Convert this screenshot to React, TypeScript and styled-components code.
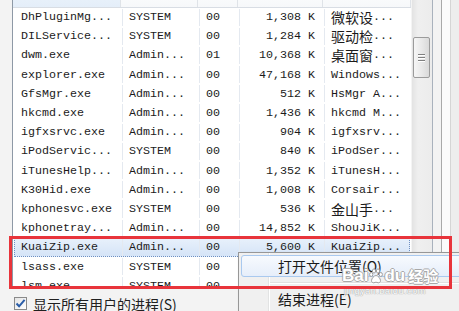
import React from "react";
import styled, { createGlobalStyle } from "styled-components";

type Proc = { name: string; user: string; cpu: string; mem: string; desc: string };

const procs: Proc[] = [
  { name: "DhPluginMg...", user: "SYSTEM", cpu: "00", mem: "1,308 K", desc: "微软设..." },
  { name: "DILService...", user: "SYSTEM", cpu: "00", mem: "1,284 K", desc: "驱动检..." },
  { name: "dwm.exe", user: "Admin...", cpu: "01", mem: "10,368 K", desc: "桌面窗..." },
  { name: "explorer.exe", user: "Admin...", cpu: "00", mem: "47,168 K", desc: "Windows..." },
  { name: "GfsMgr.exe", user: "Admin...", cpu: "00", mem: "512 K", desc: "HsMgr A..." },
  { name: "hkcmd.exe", user: "Admin...", cpu: "00", mem: "1,436 K", desc: "hkcmd M..." },
  { name: "igfxsrvc.exe", user: "Admin...", cpu: "00", mem: "904 K", desc: "igfxsrv..." },
  { name: "iPodServic...", user: "SYSTEM", cpu: "00", mem: "840 K", desc: "iPodSer..." },
  { name: "iTunesHelp...", user: "Admin...", cpu: "00", mem: "1,352 K", desc: "iTunesH..." },
  { name: "K30Hid.exe", user: "Admin...", cpu: "00", mem: "1,008 K", desc: "Corsair..." },
  { name: "kphonesvc.exe", user: "SYSTEM", cpu: "00", mem: "536 K", desc: "金山手..." },
  { name: "kphonetray...", user: "Admin...", cpu: "00", mem: "14,852 K", desc: "ShouJiK..." },
  { name: "KuaiZip.exe", user: "Admin...", cpu: "00", mem: "5,600 K", desc: "KuaiZip..." },
  { name: "lsass.exe", user: "SYSTEM", cpu: "00", mem: "2,904 K", desc: "Local S..." },
  { name: "lsm.exe", user: "SYSTEM", cpu: "00", mem: "1,016 K", desc: "本地会..." },
];

const SELECTED = "KuaiZip.exe";

// wide (CJK) chars are twice the width of the ascii ones, like SimSun
const splitWide = (text: string) => {
  const parts = text.split(/([\u3400-\u9fff]+)/).filter(Boolean);
  return parts.map((p, i) => (/[\u3400-\u9fff]/.test(p) ? <Wide key={i}>{p}</Wide> : p));
};

const GlobalStyle = createGlobalStyle`
  html, body {
    margin: 0;
    padding: 0;
    background: #f3f3f3;
    overflow: hidden;
  }
  #root {
    width: 459px;
    height: 311px;
  }
`;

const Window = styled.div`
  position: relative;
  display: grid;
  grid-template-columns: 12px 421px 8px 1px 1fr;
  grid-template-rows: 289px 22px;
  width: 459px;
  height: 311px;
  overflow: hidden;
  background: #f3f3f3;
  font-family: "Liberation Mono", "Noto Sans CJK SC", monospace;
  color: #1b1b1b;
`;

const ListPane = styled.div`
  grid-column: 2;
  grid-row: 1;
  display: flex;
  box-sizing: border-box;
  border-left: 1px solid #8e99a6;
  border-right: 1px solid #a9b2bd;
  border-bottom: 1px solid #8e99a6;
  background: #fff;
  overflow: hidden;
`;

const Table = styled.div`
  flex: 1;
  overflow: hidden;
`;

const COLS = "108px 77px 40px 85px 88px";

const HeaderRow = styled.div`
  display: grid;
  grid-template-columns: ${COLS};
  height: 24px;
  margin-top: -16.5px;
  border-bottom: 1px solid #d8dde4;
  box-sizing: border-box;
`;

const HeaderCell = styled.div<{ $active?: boolean }>`
  padding-left: 7px;
  line-height: 14px;
  font-size: 12px;
  font-family: "Noto Sans CJK SC", sans-serif;
  color: #666;
  white-space: nowrap;
  overflow: hidden;
  border-right: 1px solid #dfe3e8;
  background: ${p => (p.$active ? "linear-gradient(#eef5fc, #e4eef9)" : "linear-gradient(#ffffff, #f6f8fa)")};
`;

const Row = styled.div<{ $selected?: boolean }>`
  display: grid;
  grid-template-columns: ${COLS};
  height: 19.2px;
  box-sizing: border-box;
  margin-left: 1px;
  margin-right: 1px;
  border: 1px dotted ${p => (p.$selected ? "#6d8fc2" : "transparent")};
  background: ${p => (p.$selected ? "linear-gradient(#e7f0fb, #d5e4f7)" : "transparent")};
`;

const Cell = styled.div<{ $right?: boolean }>`
  display: flex;
  align-items: center;
  justify-content: ${p => (p.$right ? "flex-end" : "flex-start")};
  padding: ${p => (p.$right ? "0 9px 0 0" : "0 0 0 6px")};
  font-size: 11.67px;
  white-space: pre;
  overflow: hidden;
  border-right: 1px solid #e4e9f0;
`;

const Wide = styled.span`
  font-family: "Noto Sans CJK SC", sans-serif;
  font-size: 14px;
  line-height: 1;
`;

const ScrollTrack = styled.div`
  position: relative;
  width: 21px;
  background: linear-gradient(90deg, #e3e3e3, #efefef 30%, #ececec);
  border-left: 1px solid #f4f4f4;
  box-sizing: border-box;
  padding-top: 37px;
`;

const Thumb = styled.div`
  display: flex;
  flex-direction: column;
  align-items: center;
  justify-content: center;
  gap: 2px;
  width: 17px;
  height: 41px;
  margin-left: 1px;
  box-sizing: border-box;
  border: 1px solid #9b9b9b;
  border-radius: 2px;
  background: linear-gradient(90deg, #f6f6f6, #e9e9e9 50%, #d9d9d9);
`;

const Grip = styled.span`
  width: 7px;
  height: 1px;
  background: #808080;
  box-shadow: 0 1px 0 #fff;
`;

const FrameLine = styled.div`
  grid-column: 4;
  grid-row: 1 / 3;
  background: #a9a9a9;
`;

const FrameEdge = styled.div`
  grid-column: 5;
  grid-row: 1 / 3;
  background: linear-gradient(90deg, #fbfbfb 0, #fbfbfb 8px, #d5d5d5 8px, #d5d5d5 9px, #ededed 9px);
`;

const Footer = styled.div`
  grid-column: 1 / 4;
  grid-row: 2;
  display: flex;
  align-items: center;
  gap: 6px;
  padding: 7px 0 0 14px;
`;

const CheckBox = styled.span`
  display: flex;
  align-items: center;
  justify-content: center;
  width: 13px;
  height: 13px;
  box-sizing: border-box;
  border: 1px solid #8a8a8a;
  background: linear-gradient(135deg, #e4e4e4, #ffffff);
`;

const FooterLabel = styled.span`
  font-family: "Noto Sans CJK SC", sans-serif;
  font-size: 14px;
  color: #202020;
  white-space: nowrap;
`;

const Menu = styled.div`
  position: absolute;
  left: 238px;
  top: 252px;
  width: 250px;
  height: 80px;
  padding: 2px;
  box-sizing: border-box;
  background: #f0f0f0;
  border: 1px solid #979797;
  box-shadow: 2px 2px 3px rgba(0, 0, 0, 0.25);
  font-family: "Noto Sans CJK SC", sans-serif;
  font-size: 14px;
  color: #1a1a1a;

  &::before {
    content: "";
    position: absolute;
    left: 29px;
    top: 0;
    bottom: 0;
    width: 1px;
    background: #e2e3e3;
    box-shadow: 1px 0 0 #fff;
  }
`;

const MenuItem = styled.div<{ $hot?: boolean }>`
  position: relative;
  z-index: 1;
  height: 22px;
  line-height: 21px;
  padding-left: 36px;
  box-sizing: border-box;
  border: 1px solid ${p => (p.$hot ? "#a9c9ef" : "transparent")};
  border-radius: 3px;
  background: ${p => (p.$hot ? "linear-gradient(#f7fafe, #e6eefa)" : "transparent")};
`;

const Separator = styled.div`
  height: 11px;
  margin-left: 28px;
  background: linear-gradient(transparent 5px, #e0e0e0 5px, #e0e0e0 6px, #fff 6px, #fff 7px, transparent 7px);
`;

const Watermark = styled.div`
  position: absolute;
  left: 342px;
  top: 267px;
  z-index: 4;
  display: flex;
  flex-direction: column;
  color: #fff;
  text-shadow: 1px 0 0 #a8a8a8, -1px 0 0 #a8a8a8, 0 1px 0 #a8a8a8, 0 -1px 0 #a8a8a8;
  pointer-events: none;
`;

const Brand = styled.div`
  display: flex;
  align-items: center;
  font-family: "Liberation Sans", sans-serif;
  font-weight: bold;
  font-size: 17px;
  line-height: 18px;
`;

const BrandCn = styled.span`
  font-family: "Noto Sans CJK SC", sans-serif;
  font-weight: bold;
  font-size: 15px;
  margin-left: 3px;
`;

const Site = styled.div`
  font-family: "Liberation Sans", sans-serif;
  font-size: 9.5px;
  line-height: 11px;
  letter-spacing: 0.3px;
  margin-left: 2px;
  text-shadow: 0 0 1px #9a9a9a, 0 0 1px #9a9a9a;
`;

const Annotation = styled.div`
  position: absolute;
  left: 9px;
  top: 236px;
  width: 443px;
  height: 53px;
  box-sizing: border-box;
  border: 3px solid #e8343b;
  z-index: 5;
  pointer-events: none;
`;

const Paw = () => (
  <svg width="14" height="16" viewBox="0 0 14 16" style={{ margin: "0 1px" }}>
    <g fill="#fff" stroke="#a0a0a0" strokeWidth="1">
      <ellipse cx="2.2" cy="6.5" rx="1.6" ry="2" />
      <ellipse cx="5" cy="3" rx="1.6" ry="2.1" />
      <ellipse cx="9" cy="3" rx="1.6" ry="2.1" />
      <ellipse cx="11.8" cy="6.5" rx="1.6" ry="2" />
      <path d="M7 7.5c-2 0-4.5 3-4.5 5.2 0 1.6 1.3 2.3 2.4 2.1 1-.2 1.4-.6 2.1-.6s1.1.4 2.1.6c1.1.2 2.4-.5 2.4-2.1C11.5 10.5 9 7.5 7 7.5z" />
    </g>
  </svg>
);

const Check = () => (
  <svg width="11" height="11" viewBox="0 0 11 11">
    <path d="M1.5 5.5l2.6 2.8L9.6 1.8" fill="none" stroke="#2a5da8" strokeWidth="2" />
  </svg>
);

export default function App() {
  return (
    <>
      <GlobalStyle />
      <Window>
        <ListPane>
          <Table>
            <HeaderRow>
              <HeaderCell $active>映像名称</HeaderCell>
              <HeaderCell>用户名</HeaderCell>
              <HeaderCell>CPU</HeaderCell>
              <HeaderCell>内存(...</HeaderCell>
              <HeaderCell>描述</HeaderCell>
            </HeaderRow>
            {procs.map(p => (
              <Row key={p.name} $selected={p.name === SELECTED}>
                <Cell>{p.name}</Cell>
                <Cell>{p.user}</Cell>
                <Cell>{p.cpu}</Cell>
                <Cell $right>{p.mem}</Cell>
                <Cell>{splitWide(p.desc)}</Cell>
              </Row>
            ))}
          </Table>
          <ScrollTrack>
            <Thumb>
              <Grip />
              <Grip />
              <Grip />
            </Thumb>
          </ScrollTrack>
        </ListPane>
        <FrameLine />
        <FrameEdge />
        <Footer>
          <CheckBox>
            <Check />
          </CheckBox>
          <FooterLabel>显示所有用户的进程(S)</FooterLabel>
        </Footer>

        <Menu>
          <MenuItem $hot>打开文件位置(O)</MenuItem>
          <Separator />
          <MenuItem>结束进程(E)</MenuItem>
        </Menu>

        <Watermark>
          <Brand>
            Bai
            <Paw />
            du
            <BrandCn>经验</BrandCn>
          </Brand>
          <Site>jingyan.baidu.com</Site>
        </Watermark>

        <Annotation />
      </Window>
    </>
  );
}
